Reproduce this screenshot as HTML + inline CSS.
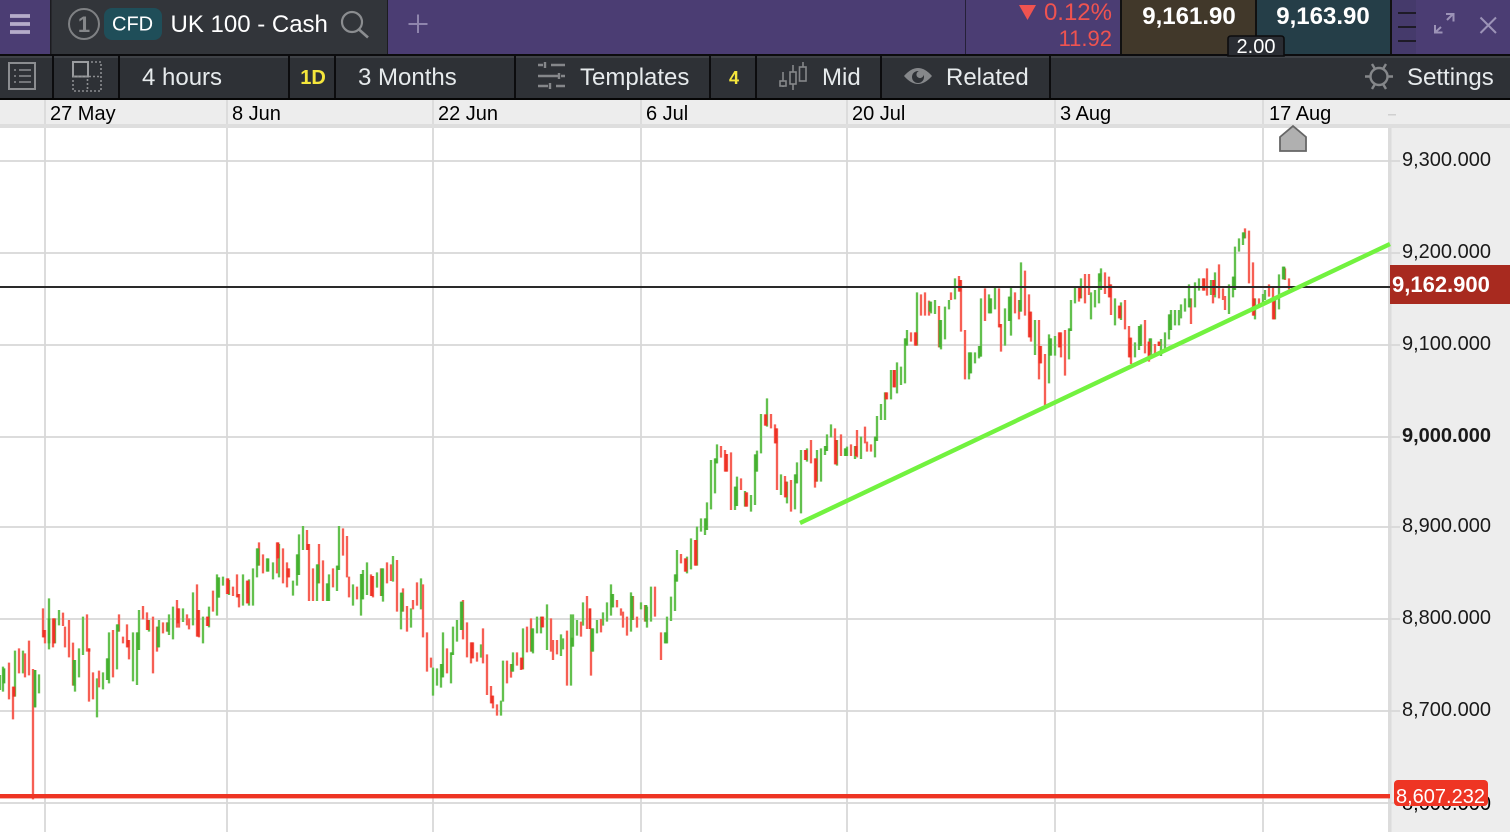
<!DOCTYPE html>
<html><head><meta charset="utf-8"><title>UK 100 - Cash</title>
<style>
html,body{margin:0;padding:0;width:1510px;height:832px;overflow:hidden;background:#fff}
svg{display:block}
text{font-family:"Liberation Sans",Arial,sans-serif}
.g{fill:none;stroke:#63c04e;stroke-width:7}
.r{fill:none;stroke:#f65f54;stroke-width:7}
.gb{fill:none;stroke:#45b030;stroke-width:8}
.rb{fill:none;stroke:#ee3226;stroke-width:8}
.t{font-size:24px;fill:#e6eaec}
.d{font-size:20px;fill:#000}
.a{font-size:20px;fill:#1a1a1a}
.ic{fill:none;stroke:#8b8d90;stroke-width:2}
</style></head><body>
<svg width="1510" height="832" viewBox="0 0 1510 832" xmlns="http://www.w3.org/2000/svg">
<rect width="1510" height="832" fill="#fff"/>
<!-- axis -->
<rect x="1390" y="100" width="120" height="732" fill="#ededed"/>
<rect x="1388" y="124" width="3.500" height="708" fill="#dcdcdc"/>
<rect x="0" y="100" width="1510" height="24" fill="#ededed"/>
<rect x="0" y="124" width="1510" height="4" fill="#dedede"/>
<!-- grid -->
<g stroke="#d8d8d8" stroke-width="1.8" fill="none">
<path d="M0 161H1400M0 253H1400M0 345H1400M0 437H1400M0 527H1400M0 619H1400M0 711H1400M0 803H1400"/>
<path d="M45 128V832M227 128V832M433 128V832M641 128V832M847 128V832M1055 128V832M1263 128V832"/>
</g>
<path d="M45 100V124M227 100V124M433 100V124M641 100V124M847 100V124M1055 100V124M1263 100V124" stroke="#dcdcdc" stroke-width="2"/>
<rect x="1388" y="114" width="8" height="1.5" fill="#d0d0d0"/>
<text class="d" x="50" y="120">27 May</text><text class="d" x="232" y="120">8 Jun</text><text class="d" x="438" y="120">22 Jun</text><text class="d" x="646" y="120">6 Jul</text><text class="d" x="852" y="120">20 Jul</text><text class="d" x="1060" y="120">3 Aug</text><text class="d" x="1269" y="120">17 Aug</text>
<!-- candles -->
<g transform="translate(0 520) scale(.33333)">
<path class="g" d="M0 465V510M9 440V515M45 392V530M69 392V460M105 450V562M117 463V520M147 235V388M165 295V370M177 270V316M225 420V515M237 385V472M249 290V405M291 475V592M309 457V508M321 415V480M327 337V490M351 313V448M399 337V484M411 337V495M417 270V390M447 300V335M477 300V382M507 283V345M519 260V358M549 265V306M579 217V316M609 290V370M627 260V322M651 163V287M657 172V233M669 170V197M687 180V225M729 163V257M747 178V257M759 145V257M771 85V172M801 115V155M819 127V178M837 72V172M879 182V227M891 103V197M897 43V165M909 18V90M951 133V243M981 190V243M987 163V243M1011 137V213M1017 18V150"/>
<path class="r" d="M27 428V538M39 500V598M57 385V460M75 400V472M87 362V466M99 447V838M129 265V352M135 330V370M159 295V382M189 278V318M195 320V382M207 300V412M219 368V497M261 283V395M267 385V545M279 457V538M297 452V502M339 330V472M357 283V335M369 350V370M381 313V382M387 360V418M429 258V298M441 277V330M459 290V460M471 320V395M489 307V340M501 307V335M531 240V323M537 265V323M561 283V316M567 295V328M591 193V350M597 270V352M621 290V318M639 212V275M681 175V222M699 200V228M711 163V232M717 222V262M741 182V250M777 67V137M789 103V160M831 67V160M849 85V190M861 127V202M867 145V172M921 30V90M927 72V243M939 145V243M957 72V190M969 121V243M999 145V202"/>
<path class="gb" d="M12 445V490M105 450V562M147 295V370M222 420V497M324 415V480M354 313V335M414 337V390M474 320V382M504 307V335M654 172V233M774 85V137M804 115V155M894 103V165M954 133V190M984 190V243M1014 137V150"/>
<path class="rb" d="M42 500V530M132 330V352M162 295V370M267 385V395M384 360V382M444 300V330M534 265V310M594 270V350M624 290V318M684 175V222M714 222V232M744 182V250M834 67V115M864 145V172M924 72V90"/>
</g>
<g transform="translate(340 520) scale(.33333)">
<path class="g" d="M39 193V257M63 162V287M69 150V238M81 127V225M111 157V203M129 145V245M159 108V185M183 218V328M213 265V323M243 175V268M279 443V527M291 445V497M303 432V503M309 337V472M333 397V490M339 320V405M351 300V365M363 245V330M423 373V413M483 542V587M489 422V545M519 397V455M549 325V448M579 325V400M591 290V340M603 290V340M621 253V390M663 343V408M669 355V388M693 283V497M699 283V380M711 300V347M729 247V317M759 325V395M771 300V340M789 277V317M801 247V305M813 193V287M819 222V262M873 217V335M903 247V268M921 260V323M933 200V305"/>
<path class="r" d="M9 25V107M21 48V172M27 170V232M51 200V238M93 163V228M99 168V232M123 145V228M141 127V190M153 133V183M171 120V275M189 205V275M201 258V335M219 240V268M231 187V257M249 193V352M261 337V455M273 413V443M321 385V460M369 240V358M381 307V412M393 367V430M399 367V415M411 397V425M429 325V430M441 403V525M453 498V550M459 527V565M471 553V587M501 422V490M513 432V473M531 397V437M543 413V450M561 320V397M573 295V395M609 290V322M633 295V395M639 360V420M651 360V403M681 332V497M723 305V350M741 228V327M753 325V467M783 297V337M831 240V262M843 265V287M849 275V323M861 290V347M879 228V300M891 290V323M915 255V305M945 200V290"/>
<path class="gb" d="M66 162V238M126 145V228M186 218V275M306 432V472M336 397V405M366 245V330M516 432V455M576 325V395M696 353V380M756 325V395M816 222V262M876 228V300M918 255V305"/>
<path class="rb" d="M96 168V228M396 367V415M456 527V550M546 413V448M606 290V322M750 265V327"/>
</g>
<g transform="translate(660 380) scale(.33333)">
<path class="r" d="M3 757V840M63 522V550M75 535V575M105 480V557M183 198V233M195 210V275M201 222V275M213 217V390M243 295V330M261 337V380M315 103V137M333 102V145M345 133V190M351 145V330M375 288V352M393 300V395M435 210V240M453 180V250M465 235V323M525 145V253M543 163V228M573 193V228M591 150V232M615 140V190M621 185V215M633 193V215"/>
<path class="g" d="M15 757V790M21 710V790M33 650V723M45 583V693M51 510V605M81 530V580M93 475V568M111 440V557M123 415V455M135 415V465M141 367V450M153 240V388M165 235V340M171 193V250M225 320V390M231 290V378M255 333V380M273 345V395M285 223V375M291 212V275M303 102V220M321 55V140M363 283V345M381 305V370M405 283V388M411 247V310M423 210V400M441 205V245M471 210V305M483 205V305M495 198V225M501 163V213M513 133V172M531 180V257M555 205V228M561 200V228M585 198V237M603 170V237M645 170V232M651 108V183"/>
<path class="gb" d="M18 757V790M48 583V605M138 415V450M168 235V250M228 320V378M288 223V275M408 283V310M498 198V213M558 205V228M648 170V183"/>
<path class="rb" d="M78 535V575M108 480V557M198 222V275M258 337V380M318 103V137M348 145V190M378 305V352M438 210V240M468 235V305M528 180V253M588 198V228"/>
</g>
<g transform="translate(880 250) scale(.33333)">
<path class="g" d="M3 462V510M15 427V510M33 360V448M51 337V430M63 350V405M75 265V400M81 240V287M111 127V287M153 155V190M165 150V192M183 210V298M195 170V268M207 150V178M225 85V148M267 307V388M273 307V370M285 307V340M297 288V325M303 145V320M327 133V190M333 145V190M345 110V178M375 175V287M387 140V213M393 110V257M423 37V185M465 210V315M507 253V400M513 265V317M525 258V317M567 235V328M573 150V243M585 110V160M603 85V145"/>
<path class="r" d="M21 427V448M45 360V412M93 247V275M105 247V287M123 133V197M135 127V197M147 152V197M177 168V292M213 127V150M237 78V125M243 90V245M255 240V388M315 115V213M357 115V232M363 222V305M405 127V190M417 150V208M435 62V197M447 133V262M453 185V275M477 210V388M483 288V340M495 312V465M537 247V292M543 247V322M555 240V377M597 108V155M615 72V160M627 72V135"/>
<path class="gb" d="M78 265V287M150 155V185M180 210V292M270 307V370M300 288V320M330 145V190M390 140V213M420 150V185M510 265V317M570 235V243"/>
<path class="rb" d="M18 427V448M42 360V412M108 247V287M240 90V125M360 222V232M450 185V262M480 288V340M540 247V292M600 108V145"/>
</g>
<g transform="translate(1090 220) scale(.33333)">
<path class="g" d="M3 217V298M15 210V262M27 160V250M33 145V210M75 235V316M93 247V300M135 367V412M147 318V390M153 313V378M183 355V410M213 357V408M225 337V388M237 283V358M243 270V330M255 270V316M267 270V316M273 253V295M285 235V275M297 193V262M315 187V262M327 175V212M363 180V225M375 157V232M417 193V282M429 170V232M435 80V210M447 55V95M459 37V75M495 235V298M519 222V258M525 210V240M555 237V298M567 163V268M579 140V178"/>
<path class="r" d="M45 157V222M57 170V232M63 193V285M87 257V295M105 240V328M117 318V412M123 353V432M165 300V400M177 365V425M195 372V410M207 365V378M303 235V312M339 175V212M351 145V227M369 180V250M387 133V235M399 205V240M405 228V270M465 25V55M477 32V190M489 127V287M507 235V262M537 193V230M549 198V298M585 145V180M597 175V208"/>
<path class="gb" d="M30 160V185M150 318V378M180 355V395M240 283V330M300 235V262M432 170V210M462 37V55M582 140V178"/>
<path class="rb" d="M60 193V232M90 257V295M120 353V412M177 365V410M207 365V378M342 175V212M372 180V225M492 235V287M552 237V298"/>
</g>
<!-- lines -->
<rect x="0" y="286" width="1390" height="2" fill="#2a2a2a"/>
<path d="M800 523L1390 244" stroke="#72f23f" stroke-width="4.400" fill="none"/>
<rect x="0" y="794" width="1390" height="4.4" fill="#ee3524"/>
<!-- marker -->
<path d="M1293 126L1306 137V151H1280V137Z" fill="#b0b0b0" stroke="#666" stroke-width="1.800"/>
<!-- axis labels -->
<text class="a" x="1402" y="166">9,300.000</text>
<text class="a" x="1402" y="258">9,200.000</text>
<text class="a" x="1402" y="350">9,100.000</text>
<text class="a" x="1402" y="442" style="font-weight:bold">9,000.000</text>
<text class="a" x="1402" y="532">8,900.000</text>
<text class="a" x="1402" y="624">8,800.000</text>
<text class="a" x="1402" y="716">8,700.000</text>
<text class="a" x="1402" y="810" style="fill:#000">8,600.000</text>
<rect x="1390" y="265" width="120" height="39" fill="#a82a1f"/>
<text x="1392" y="292" font-size="22" font-weight="bold" fill="#fff">9,162.900</text>
<rect x="1394" y="780" width="94" height="26" rx="4" fill="#ee3524"/>
<text x="1396" y="803" font-size="20" fill="#fff">8,607.232</text>
<!-- top bar -->
<rect x="0" y="0" width="1510" height="54" fill="#4b3d73"/>
<rect x="0" y="54" width="1510" height="2" fill="#0c0c0e"/>
<rect x="51" y="0" width="336" height="54" fill="#32353a"/>
<rect x="50" y="0" width="1.500" height="54" fill="#1c1c20"/>
<rect x="387" y="0" width="1" height="54" fill="#1c1c20"/>
<rect x="965" y="0" width="1" height="54" fill="#252038"/>
<path d="M10 16H30M10 24H30M10 32H30" stroke="#b5acc9" stroke-width="3.800"/>
<circle cx="84" cy="24" r="15" fill="none" stroke="#7f8184" stroke-width="2"/>
<text x="84" y="32" font-size="22" fill="#85878a" text-anchor="middle" font-weight="bold">1</text>
<rect x="104" y="8" width="58" height="32" rx="8" fill="#1f4e59"/>
<text x="112" y="30.500" font-size="20" fill="#fff">CFD</text>
<text x="170.500" y="32" font-size="24" fill="#fff">UK 100 - Cash</text>
<circle cx="352" cy="22" r="10" fill="none" stroke="#8b8d90" stroke-width="2.200"/>
<path d="M359 29.500L368 37.500" stroke="#8b8d90" stroke-width="2.600"/>
<path d="M418 14.500V33M408.500 24H427.500" stroke="#8f85ad" stroke-width="2"/>
<path d="M1019 5H1036L1027.500 20Z" fill="#ef5350"/>
<text x="1112" y="20" font-size="24" fill="#ef5350" text-anchor="end">0.12%</text>
<text x="1112" y="46" font-size="22" fill="#ef5350" text-anchor="end">11.92</text>
<rect x="1120" y="0" width="2" height="54" fill="#111"/>
<rect x="1122" y="0" width="133" height="54" fill="#41382a"/>
<rect x="1255" y="0" width="2" height="54" fill="#111"/>
<rect x="1257" y="0" width="133" height="54" fill="#253e48"/>
<rect x="1390" y="0" width="2" height="54" fill="#111"/>
<text x="1189" y="24" font-size="24" font-weight="bold" fill="#fff" text-anchor="middle">9,161.90</text>
<text x="1323" y="24" font-size="24" font-weight="bold" fill="#fff" text-anchor="middle">9,163.90</text>
<rect x="1392" y="0" width="24" height="54" fill="#453a6b"/>
<path d="M1398 13H1416M1398 27H1416M1398 41H1416" stroke="#111" stroke-width="1.600"/>
<path d="M1447 20L1453 14M1446 14H1453.500V21.500M1441 27L1435 32.500M1435 25V32.500H1442.500" fill="none" stroke="#9c93b7" stroke-width="2"/>
<path d="M1480.500 17.500L1496 33M1496 17.500L1480.500 33" stroke="#9c93b7" stroke-width="2"/>
<!-- second bar -->
<rect x="0" y="56" width="1510" height="42" fill="#2e3136"/>
<rect x="0" y="56" width="1510" height="2" fill="#3f4247"/>
<rect x="0" y="98" width="1510" height="2" fill="#050505"/>
<path d="M53 56V98M119 56V98M289 56V98M335 56V98M515 56V98M710 56V98M756 56V98M881 56V98M1050 56V98" stroke="#0c0c0e" stroke-width="2"/>
<path d="M1228 56V39Q1228 36 1231 36H1281Q1284 36 1284 39V56Z" fill="#2a2d33" stroke="#0c0c0e" stroke-width="1.600"/>
<text x="1256" y="53" font-size="20" fill="#fff" text-anchor="middle">2.00</text>
<!-- list icon -->
<rect x="9" y="63" width="26" height="26" class="ic"/>
<path d="M14 70H16M19 70H31M14 76H16M19 76H31M14 82H16M19 82H31" class="ic" style="stroke-width:1.600"/>
<!-- layout icon -->
<rect x="73" y="62" width="15" height="14.500" fill="none" stroke="#9a9c9f" stroke-width="2"/>
<path d="M91 62H101V91H73V79M73 76.500H101M87.500 79V91" fill="none" stroke="#8b8d90" stroke-width="1.600" stroke-dasharray="2 2"/>
<text class="t" x="142" y="85">4 hours</text>
<text x="313" y="84" font-size="20" font-weight="bold" fill="#f5e63c" text-anchor="middle">1D</text>
<text class="t" x="358" y="85">3 Months</text>
<!-- templates icon -->
<path d="M538 65H543M551 65H565M538 76H558M561 76H565M538 86H548M556 86H565" stroke="#85878a" stroke-width="2.600" fill="none"/>
<path d="M545 62V68M559 73V79M550 83V89" stroke="#85878a" stroke-width="2.400" fill="none"/>
<text class="t" x="580" y="85">Templates</text>
<text x="734" y="84" font-size="18" font-weight="bold" fill="#f5e63c" text-anchor="middle">4</text>
<!-- candle icon -->
<path d="M783 72V87M793 65V90M803 62V81" stroke="#85878a" stroke-width="1.600" fill="none"/>
<rect x="780" y="81" width="6" height="5" fill="#2e3136" stroke="#85878a" stroke-width="1.600"/>
<rect x="790" y="72" width="6" height="12" fill="#2e3136" stroke="#85878a" stroke-width="1.600"/>
<rect x="799.500" y="67" width="6.500" height="14" fill="#2e3136" stroke="#85878a" stroke-width="1.600"/>
<text class="t" x="822" y="85">Mid</text>
<!-- eye icon -->
<path d="M904 76Q918 60 932 76Q918 92 904 76Z" fill="#85878a"/>
<circle cx="918" cy="77" r="6" fill="#2e3136"/>
<circle cx="920" cy="74.500" r="3.600" fill="#85878a"/>
<text class="t" x="946" y="85">Related</text>
<!-- gear -->
<circle cx="1379" cy="76.500" r="8.500" fill="none" stroke="#85878a" stroke-width="2.400"/>
<path d="M1365 76.500H1371M1387 76.500H1393M1372 64L1375 69M1386 64L1383 69M1372 89L1375 84M1386 89L1383 84" stroke="#85878a" stroke-width="2.400" fill="none"/>
<text class="t" x="1407" y="85">Settings</text>
</svg>
</body></html>
